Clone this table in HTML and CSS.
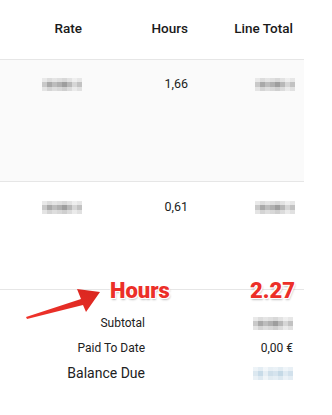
FILE: index.html
```html
<!DOCTYPE html>
<html lang="en">
<head>
    <meta charset="UTF-8">
    <meta name="viewport" content="width=device-width, initial-scale=1.0">
    <title>Invoice</title>
    <link rel="stylesheet" href="styles.css">
</head>
<body>
    <div class="invoice">
        <table class="items">
            <thead>
                <tr>
                    <th class="col-rate">Rate</th>
                    <th class="col-hours">Hours</th>
                    <th class="col-total">Line Total</th>
                </tr>
            </thead>
            <tbody>
                <tr class="row-first">
                    <td><span class="hidden-value"></span></td>
                    <td>1,66</td>
                    <td><span class="hidden-value"></span></td>
                </tr>
                <tr class="row-second">
                    <td><span class="hidden-value"></span></td>
                    <td>0,61</td>
                    <td><span class="hidden-value"></span></td>
                </tr>
            </tbody>
        </table>

        <div class="totals">
            <div class="label">Subtotal</div>
            <div class="value"><span class="hidden-value"></span></div>
            <div class="label">Paid To Date</div>
            <div class="value">0,00 €</div>
            <div class="label big">Balance Due</div>
            <div class="value"><span class="hidden-value blue"></span></div>
        </div>

        <!-- note drawn on top of the sheet -->
        <div class="note note-word">Hours</div>
        <div class="note note-sum">2.27</div>
        <svg class="arrow" width="80" height="36" viewBox="0 0 80 36">
            <defs>
                <linearGradient id="arrowFill" x1="0" y1="1" x2="1" y2="0">
                    <stop offset="0" stop-color="#f0332b"/>
                    <stop offset="1" stop-color="#d9261f"/>
                </linearGradient>
            </defs>
            <path d="M2 33 L57 15 L53 5 L76 8 L62 28 L59 21 L3 35 Z" fill="url(#arrowFill)"/>
        </svg>
    </div>
</body>
</html>
```

FILE: styles.css
```css
* {
    margin: 0;
    padding: 0;
    box-sizing: border-box;
}

body {
    font-family: Roboto, "Liberation Sans", Arial, sans-serif;
    color: #212121;
    background: #fff;
}

.invoice {
    position: relative;
    width: 304px;
}

.items {
    width: 304px;
    border-collapse: collapse;
    table-layout: fixed;
    font-size: 12.5px;
}

.col-rate { width: 93px; }
.col-hours { width: 106px; }
.col-total { width: 105px; }

.items th {
    height: 59px;
    padding: 0 11px 2px 0;
    text-align: right;
    font-size: 13.5px;
    font-weight: 500;
    color: #1a1a1a;
    border-bottom: 1px solid #e6e6e6;
}

.items td {
    text-align: right;
    vertical-align: top;
    padding: 16px 11px 0 0;
    line-height: 15px;
    border-bottom: 1px solid #e6e6e6;
}

.items td:last-child {
    padding-right: 9px;
}

.row-first td {
    height: 122px;
    background: #fafafa;
}

.row-second td {
    height: 108px;
    padding-top: 17px;
}

.hidden-value {
    display: inline-block;
    width: 40px;
    height: 13px;
    vertical-align: middle;
    background:
        linear-gradient(to bottom, rgba(255,255,255,0.6) 0 4px, transparent 4px 9px, rgba(255,255,255,0.5) 9px),
        linear-gradient(to right, #c9c9c9 0 5px, #a9a9a9 5px 10px, #bdbdbd 10px 15px, #b0b0b0 15px 20px, #9e9e9e 20px 25px, #b8b8b8 25px 30px, #d6d6d6 30px 35px, #c2c2c2 35px);
}

.hidden-value.blue {
    background:
        linear-gradient(to bottom, rgba(255,255,255,0.5) 0 4px, transparent 4px 9px, rgba(255,255,255,0.4) 9px),
        linear-gradient(to right, #dce8f0 0 5px, #c8dbe8 5px 10px, #e6eef4 10px 15px, #cfdfea 15px 20px, #d6e4ee 20px 25px, #c5d9e6 25px 30px, #dfeaf2 30px 35px, #d2e1ec 35px);
}

.totals {
    display: grid;
    grid-template-columns: 145px 148px;
    padding-top: 21px;
    font-size: 12px;
    line-height: 25px;
}

.totals .label {
    text-align: right;
}

.totals .value {
    text-align: right;
}

.totals .label.big {
    font-size: 14px;
}

.note {
    position: absolute;
    top: 276px;
    font-family: Roboto, "Liberation Sans", sans-serif;
    font-size: 22px;
    font-weight: 900;
    color: #ec2f28;
    line-height: 30px;
    text-shadow: 1px 1px 0 #fff, -1px -1px 0 #fff, 1px -1px 0 #fff, -1px 1px 0 #fff, 1px 2px 2px rgba(0,0,0,0.25);
}

.note-word {
    left: 110px;
}

.note-sum {
    left: 250px;
}

.arrow {
    position: absolute;
    left: 24px;
    top: 284px;
}
```
